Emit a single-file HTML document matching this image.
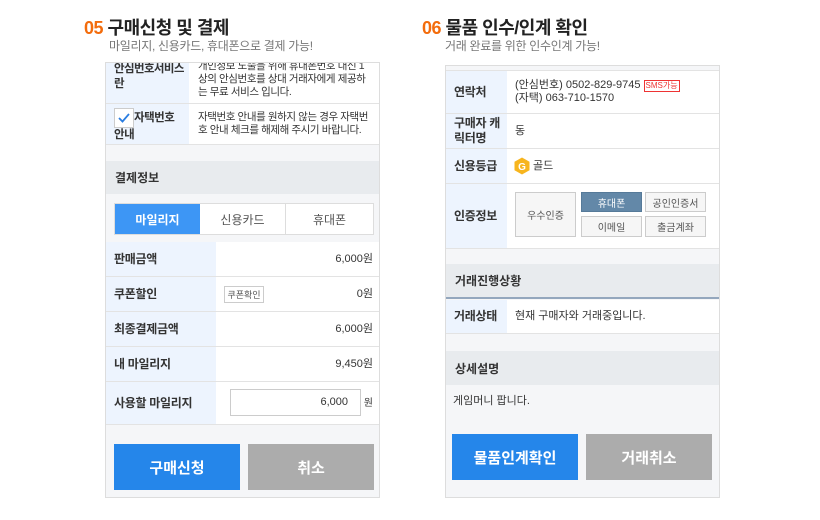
<!DOCTYPE html>
<html><head><meta charset="utf-8"><style>
*{margin:0;padding:0;box-sizing:border-box}
body{width:820px;height:520px;background:#fff;font-family:"Liberation Sans","Noto Sans CJK KR",sans-serif;position:relative;overflow:hidden;color:#333}
.a{position:absolute}
.t{font-size:18px;font-weight:bold;color:#222;letter-spacing:-0.5px}
.t b{color:#f36c0c}
.s{font-size:12px;color:#777;letter-spacing:-0.3px}
.p{position:absolute;border:1px solid #ddd;background:#f5f6f8;overflow:hidden}
.r{position:absolute;left:0;right:0;background:#fff;border-bottom:1px solid #e3e3e3}
.l{position:absolute;left:0;top:0;bottom:0;background:#edf4fe;font-size:12px;font-weight:bold;color:#333;padding-left:8px;display:flex;align-items:center;letter-spacing:-0.3px;line-height:15px;white-space:nowrap}
.v{position:absolute;top:0;bottom:0;font-size:11px;color:#333;display:flex;align-items:center;line-height:13px;white-space:nowrap}
.h{position:absolute;left:0;right:0;background:#e8ebee;font-size:12px;font-weight:bold;color:#333;padding-left:9px;display:flex;align-items:center}
.btn{position:absolute;color:#fff;font-size:15px;font-weight:bold;display:flex;align-items:center;justify-content:center}
.sb{position:absolute;border:1px solid #ccc;background:#fff;font-size:10px;color:#555;display:flex;align-items:center;justify-content:center}
</style></head><body>
<div class="a t" style="left:84px;top:14px"><b>05</b> 구매신청 및 결제</div>
<div class="a s" style="left:109px;top:37px">마일리지, 신용카드, 휴대폰으로 결제 가능!</div>
<div class="a t" style="left:422px;top:14px"><b>06</b> 물품 인수/인계 확인</div>
<div class="a s" style="left:445px;top:37px">거래 완료를 위한 인수인계 가능!</div>

<!-- left panel -->
<div class="p" style="left:105px;top:62px;width:275px;height:436px">
 <div class="r" style="top:-10px;height:51px"><div class="l" style="width:83px;align-items:flex-start;padding-top:9px;font-size:11.5px;letter-spacing:-0.6px">안심번호서비스<br>란</div><div class="v" style="left:92px;right:4px;align-items:flex-start;padding-top:7px;font-size:10.5px;letter-spacing:-0.4px">개인정보 노출을 위해 휴대폰번호 대신 1<br>상의 안심번호를 상대 거래자에게 제공하<br>는 무료 서비스 입니다.</div></div>
 <div class="r" style="top:41px;height:41px"><div class="l" style="width:83px;align-items:flex-start;padding-top:4px;padding-left:8px;display:block;font-size:11.5px;letter-spacing:-0.5px"><span style="display:inline-block;width:20px;height:20px;border:1px solid #ccc;background:#fff;vertical-align:middle;position:relative"><svg width="18" height="18" viewBox="0 0 18 18" style="position:absolute;left:0;top:0"><path d="M4 9l3.5 3.5L14 5" fill="none" stroke="#2a7de1" stroke-width="1.8"/></svg></span>자택번호<br>안내</div><div class="v" style="left:92px;right:4px;align-items:flex-start;padding-top:7px;font-size:10.5px;letter-spacing:-0.4px">자택번호 안내를 원하지 않는 경우 자택번<br>호 안내 체크를 해제해 주시기 바랍니다.</div></div>
 <div class="h" style="top:98px;height:33px">결제정보</div>
 <div class="a" style="left:8px;top:140px;width:260px;height:32px;border:1px solid #ddd;background:#fff;display:flex;font-size:12px">
  <div style="width:85px;background:#3d96f5;color:#fff;font-weight:bold;display:flex;align-items:center;justify-content:center">마일리지</div>
  <div style="width:86px;border-right:1px solid #ddd;display:flex;align-items:center;justify-content:center;color:#555">신용카드</div>
  <div style="flex:1;display:flex;align-items:center;justify-content:center;color:#555">휴대폰</div>
 </div>
 <div class="r" style="top:179px;height:35px"><div class="l" style="width:110px">판매금액</div><div class="v" style="right:6px">6,000원</div></div>
 <div class="r" style="top:214px;height:35px"><div class="l" style="width:110px">쿠폰할인</div><div class="sb" style="left:118px;top:9px;width:40px;height:17px;font-size:9px">쿠폰확인</div><div class="v" style="right:6px">0원</div></div>
 <div class="r" style="top:249px;height:35px"><div class="l" style="width:110px">최종결제금액</div><div class="v" style="right:6px">6,000원</div></div>
 <div class="r" style="top:284px;height:35px"><div class="l" style="width:110px">내 마일리지</div><div class="v" style="right:6px">9,450원</div></div>
 <div class="r" style="top:319px;height:43px"><div class="l" style="width:110px">사용할 마일리지</div><div class="a" style="left:124px;top:7px;width:131px;height:27px;border:1px solid #ccc;background:#fff;font-size:11px;text-align:right;padding:6px 12px 0 0">6,000</div><div class="v" style="right:6px;font-size:10px">원</div></div>
 <div class="btn" style="left:8px;top:381px;width:126px;height:46px;background:#2586ea">구매신청</div>
 <div class="btn" style="left:142px;top:381px;width:126px;height:46px;background:#acacac">취소</div>
</div>

<!-- right panel -->
<div class="p" style="left:445px;top:65px;width:275px;height:433px">
 <div class="r" style="top:0;height:5px;background:#f5f6f8"></div>
 <div class="r" style="top:5px;height:43px"><div class="l" style="width:61px">연락처</div><div class="v" style="left:69px"><div>(안심번호) 0502-829-9745 <span style="display:inline-block;border:1px solid #e33;color:#e33;font-size:8px;line-height:10px;padding:0 1px">SMS가능</span><br>(자택) 063-710-1570</div></div></div>
 <div class="r" style="top:48px;height:35px"><div class="l" style="width:61px">구매자 캐<br>릭터명</div><div class="v" style="left:69px">동</div></div>
 <div class="r" style="top:83px;height:35px"><div class="l" style="width:61px">신용등급</div><div class="v" style="left:68px"><svg width="16" height="18" viewBox="0 0 16 18"><path d="M8 0.5L15.5 4.7V13.3L8 17.5L0.5 13.3V4.7Z" fill="#f7b51e"/><text x="8" y="13" font-size="10" font-weight="bold" fill="#fff" text-anchor="middle" font-family="Liberation Sans">G</text></svg>&nbsp;골드</div></div>
 <div class="r" style="top:118px;height:65px"><div class="l" style="width:61px">인증정보</div>
  <div class="sb" style="left:69px;top:8px;width:61px;height:45px;background:#f6f6f6">우수인증</div>
  <div class="sb" style="left:135px;top:8px;width:61px;height:20px;background:#6388a8;border-color:#567a99;color:#fff">휴대폰</div>
  <div class="sb" style="left:199px;top:8px;width:61px;height:20px;background:#f6f6f6">공인인증서</div>
  <div class="sb" style="left:135px;top:32px;width:61px;height:21px;background:#f6f6f6">이메일</div>
  <div class="sb" style="left:199px;top:32px;width:61px;height:21px;background:#f6f6f6">출금계좌</div>
 </div>
 <div class="h" style="top:198px;height:35px;border-bottom:2px solid #94a7bd">거래진행상황</div>
 <div class="r" style="top:234px;height:34px"><div class="l" style="width:61px">거래상태</div><div class="v" style="left:69px">현재 구매자와 거래중입니다.</div></div>
 <div class="h" style="top:285px;height:34px">상세설명</div>
 <div class="a" style="left:7px;top:326px;font-size:11px;color:#333">게임머니 팝니다.</div>
 <div class="btn" style="left:6px;top:368px;width:126px;height:46px;background:#2586ea">물품인계확인</div>
 <div class="btn" style="left:140px;top:368px;width:126px;height:46px;background:#acacac">거래취소</div>
</div>
</body></html>
